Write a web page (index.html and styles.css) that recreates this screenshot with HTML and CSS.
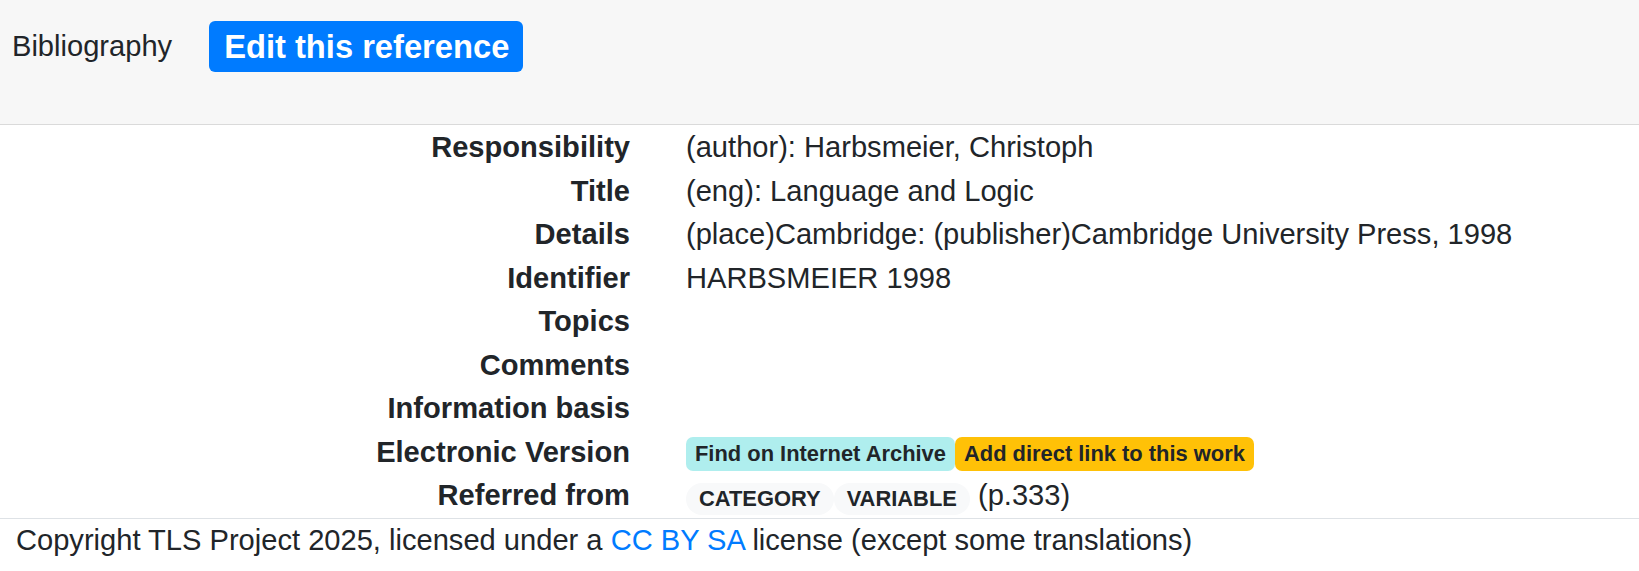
FILE: index.html
```html
<!DOCTYPE html>
<html lang="en">
<head>
    <meta charset="UTF-8">
    <meta name="viewport" content="width=device-width, initial-scale=1.0">
    <title>Bibliography</title>
    <link rel="stylesheet" href="styles.css">
</head>
<body>
    <header class="topbar">
        <span class="brand">Bibliography</span>
        <a class="btn-edit" href="#">Edit this reference</a>
    </header>
    <dl class="record">
        <dt>Responsibility</dt>
        <dd>(author): Harbsmeier, Christoph</dd>
        <dt>Title</dt>
        <dd>(eng): Language and Logic</dd>
        <dt>Details</dt>
        <dd>(place)Cambridge: (publisher)Cambridge University Press, 1998</dd>
        <dt>Identifier</dt>
        <dd>HARBSMEIER 1998</dd>
        <dt>Topics</dt>
        <dd></dd>
        <dt>Comments</dt>
        <dd></dd>
        <dt>Information basis</dt>
        <dd></dd>
        <dt>Electronic Version</dt>
        <dd><a class="badge badge-archive" href="#">Find on Internet Archive</a><a class="badge badge-warn" href="#">Add direct link to this work</a></dd>
        <dt>Referred from</dt>
        <dd><span class="badge badge-pill">CATEGORY</span><span class="badge badge-pill">VARIABLE</span> (p.333)</dd>
    </dl>
    <footer class="footer">
        Copyright TLS Project 2025, licensed under a <a href="#">CC BY SA</a> license (except some translations)
    </footer>
</body>
</html>
```

FILE: styles.css
```css
*{
    margin: 0;
    padding: 0;
    box-sizing: border-box;
}
body{
    font-family: "Liberation Sans", Arial, sans-serif;
    font-size: 29.1px;
    line-height: 43.5px;
    color: #212529;
    background-color: #fff;
}
a{
    color: #007bff;
    text-decoration: none;
}
.topbar{
    height: 125px;
    background-color: #f7f7f7;
    border-bottom: 1px solid #dadada;
    display: flex;
    align-items: flex-start;
    padding: 21px 0 0 12px;
    gap: 37px;
}
.brand{
    line-height: 51px;
}
.btn-edit{
    display: inline-block;
    background-color: #007bff;
    color: #fff;
    font-weight: bold;
    font-size: 32.7px;
    line-height: 51px;
    height: 51px;
    padding: 0 14px 0 15px;
    border-radius: 6px;
}
.record{
    display: grid;
    grid-template-columns: 630px 1fr;
    column-gap: 56px;
    padding-top: 1px;
}
.record dt{
    font-weight: bold;
    text-align: right;
}
.record dd{
    min-height: 43.5px;
}
.badge{
    display: inline-block;
    font-size: 21.9px;
    font-weight: bold;
    line-height: 1;
    padding: 6px 9px 7px;
    border-radius: 7px;
    color: #212529;
    vertical-align: 1px;
}
.badge-archive{
    background-color: #afeeee;
}
.badge-warn{
    background-color: #ffc107;
}
.badge-pill{
    background-color: #f8f9fa;
    padding: 5.5px 13px;
    border-radius: 20px;
    vertical-align: -1px;
}
.footer{
    border-top: 1px solid #dee2e6;
    padding: 0 0 0 16px;
}
```
